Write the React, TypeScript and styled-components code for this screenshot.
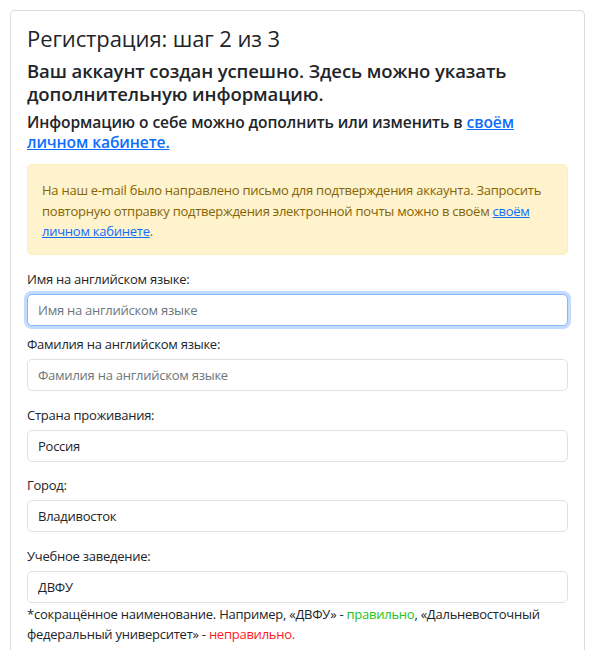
import React from "react";
import styled, { createGlobalStyle } from "styled-components";

const Global = createGlobalStyle`
  html, body { margin: 0; padding: 0; background: #fff; }
  body {
    font-family: "Open Sans", "Noto Sans", sans-serif;
    color: #212529;
    -webkit-font-smoothing: antialiased;
  }
  * { box-sizing: border-box; }
`;

const Page = styled.div`
  padding: 10px 9px 0 10px;
  height: 650px;
  overflow: hidden;
`;

const Card = styled.div`
  border: 1px solid #dcdcdc;
  border-bottom: none;
  border-radius: 5px 5px 0 0;
  padding: 13px 16px 20px 16px;
  min-height: 700px;
`;

const Title = styled.h3`
  margin: 0 0 6px;
  font-size: 22px;
  line-height: 29px;
  font-weight: 500;
  letter-spacing: -0.1px;
`;

const Subtitle = styled.h5`
  margin: 0 0 8px;
  font-size: 18.5px;
  line-height: 23px;
  font-weight: 600;
  letter-spacing: -0.1px;
`;

const Note = styled.h6`
  margin: 0 0 12px;
  font-size: 15.6px;
  line-height: 19.5px;
  font-weight: 600;
  letter-spacing: -0.1px;
`;

const Link = styled.a`
  color: #0d6efd;
  text-decoration: underline;
`;

const Alert = styled.div`
  background: #fff3cd;
  border: 1px solid #ffeeba;
  border-radius: 5px;
  color: #856404;
  padding: 15px 14px 12px;
  font-size: 13px;
  letter-spacing: -0.25px;
  line-height: 20.5px;
  margin-bottom: 14px;
`;

const Field = styled.div<{ $gap: number }>`
  display: flex;
  flex-direction: column;
  gap: 4px;
  margin-bottom: ${(p) => p.$gap}px;
`;

const Label = styled.label`
  font-size: 13px;
  letter-spacing: -0.25px;
  line-height: 21px;
`;

const Input = styled.input<{ $focused?: boolean }>`
  display: block;
  width: 100%;
  height: 32px;
  padding: 0 10px;
  font-family: inherit;
  font-size: 13px;
  letter-spacing: -0.25px;
  color: #212529;
  background: #fff;
  border: 1px solid ${(p) => (p.$focused ? "#86b7fe" : "#dee2e6")};
  border-radius: 5px;
  outline: none;
  box-shadow: ${(p) => (p.$focused ? "0 0 0 3px rgba(13,110,253,0.25)" : "none")};
  &::placeholder { color: #6c757d; }
`;

const Help = styled.div`
  font-size: 13px;
  letter-spacing: -0.25px;
  line-height: 20px;
  margin-top: 1px;
`;

const Good = styled.span`
  color: #22c322;
`;

const Bad = styled.span`
  color: #ff1a1a;
`;

export default function App() {
  return (
    <>
      <Global />
      <Page>
        <Card>
          <Title>Регистрация: шаг 2 из 3</Title>
          <Subtitle>
            Ваш аккаунт создан успешно. Здесь можно указать дополнительную информацию.
          </Subtitle>
          <Note>
            Информацию о себе можно дополнить или изменить в{" "}
            <Link href="#">своём личном кабинете.</Link>
          </Note>
          <Alert>
            На наш e-mail было направлено письмо для подтверждения аккаунта. Запросить
            повторную отправку подтверждения электронной почты можно в своём{" "}
            <Link href="#">своём личном кабинете</Link>.
          </Alert>
          <Field $gap={8}>
            <Label>Имя на английском языке:</Label>
            <Input $focused placeholder="Имя на английском языке" />
          </Field>
          <Field $gap={14}>
            <Label>Фамилия на английском языке:</Label>
            <Input placeholder="Фамилия на английском языке" />
          </Field>
          <Field $gap={13}>
            <Label>Страна проживания:</Label>
            <Input defaultValue="Россия" />
          </Field>
          <Field $gap={14}>
            <Label>Город:</Label>
            <Input defaultValue="Владивосток" />
          </Field>
          <Field $gap={0}>
            <Label>Учебное заведение:</Label>
            <Input defaultValue="ДВФУ" />
          </Field>
          <Help>
            *сокращённое наименование. Например, «ДВФУ» - <Good>правильно</Good>,
            «Дальневосточный федеральный университет» - <Bad>неправильно.</Bad>
          </Help>
        </Card>
      </Page>
    </>
  );
}
